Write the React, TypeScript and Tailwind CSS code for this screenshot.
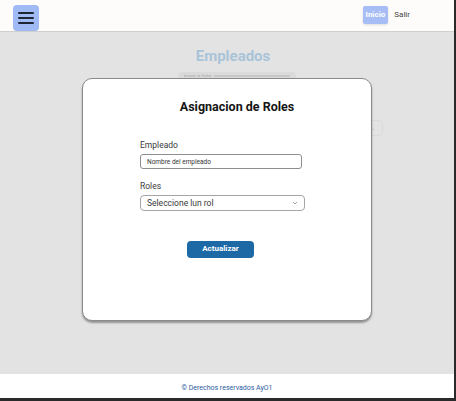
export default function App() {
  return (
    <div className="w-[456px] h-[401px] bg-[#2a2a2a] font-['Roboto',sans-serif]">
      <div className="relative w-[454px] h-[398px] flex flex-col bg-[#e3e3e3]">
        {/* Header */}
        <header className="h-[32px] shrink-0 bg-[#fdfcfb] border-b border-[#cfcfcf] flex items-center justify-between pl-[13px] pr-[44px]">
          <button className="w-[26px] h-[26px] mt-[4px] rounded-[4px] bg-[#9fbaf4] flex flex-col items-center justify-center gap-[3px]">
            <span className="block w-[16px] h-[2px] bg-[#1f2533] rounded-full" />
            <span className="block w-[16px] h-[2px] bg-[#1f2533] rounded-full" />
            <span className="block w-[16px] h-[2px] bg-[#1f2533] rounded-full" />
          </button>
          <nav className="flex items-center gap-[6px] mb-[1px]">
            <span className="h-[18px] px-[3px] flex items-center rounded-[2px] bg-[#a6bef5] text-white text-[8px] font-bold shadow-sm">
              Inicio
            </span>
            <span className="text-[8px] text-[#444]">Salir</span>
          </nav>
        </header>

        {/* Background page */}
        <main className="flex-1 flex flex-col items-center pt-[17px]">
          <h1 className="ml-[12px] text-[15px] leading-none font-bold text-[#a9c4d9]">Empleados</h1>
          <div className="ml-[20px] mt-[8px] w-[118px] h-[8px] rounded-full bg-[#dadada] flex items-center px-[6px] gap-[3px]">
            <span className="text-[4px] text-[#a8a8a8] leading-none">buscar la fecha</span>
            <span className="flex-1 h-[2px] bg-[#c8c8c8]" />
          </div>
          <div className="self-end mr-[71px] mt-[40px] w-[20px] h-[16px] rounded-[5px] border border-[#dadada] flex items-center justify-center">
            <span className="text-[5px] text-[#b8b8b8] leading-none">⌄</span>
          </div>
        </main>

        {/* Footer */}
        <footer className="h-[24px] shrink-0 bg-white flex items-center justify-center pt-[4px]">
          <span className="text-[7px] text-[#2b5e9e]">© Derechos reservados AyO1</span>
        </footer>

        {/* Modal */}
        <div className="absolute left-[82px] top-[78px] w-[290px] h-[243px] bg-white rounded-[10px] border border-[#8a8a8a] shadow-[0_2px_2px_rgba(0,0,0,0.35)]">
          <h2 className="mt-[19px] pl-[20px] text-center text-[12.5px] font-bold text-[#151515]">
            Asignacion de Roles
          </h2>
          <div className="pl-[57px] pt-[24px] w-[222px]">
            <label className="block text-[8.5px] font-normal text-[#3a3a3a] leading-none">Empleado</label>
            <div className="mt-[5px] w-[162px] h-[15px] rounded-[3px] border border-[#8e8e8e] flex items-center px-[6px]">
              <span className="text-[6.5px] leading-none text-[#333]">Nombre del empleado</span>
            </div>
            <label className="block mt-[13px] text-[8.5px] font-normal text-[#3a3a3a] leading-none">Roles</label>
            <div className="mt-[4px] w-[165px] h-[16px] rounded-[4px] border border-[#a5a5a5] flex items-center justify-between pl-[6px] pr-[6px]">
              <span className="text-[8.5px] font-normal leading-none text-[#3a3a3a]">Seleccione lun rol</span>
              <svg width="6" height="4" viewBox="0 0 6 4" fill="none">
                <path d="M1 1l2 2 2-2" stroke="#9a9a9a" strokeWidth="0.9" />
              </svg>
            </div>
            <div className="mt-[30px] pl-[47px]">
              <button className="w-[67px] h-[17px] rounded-[4px] bg-[#1c69a6] text-white text-[8px] font-bold flex items-center justify-center">
                Actualizar
              </button>
            </div>
          </div>
        </div>
      </div>
    </div>
  );
}
